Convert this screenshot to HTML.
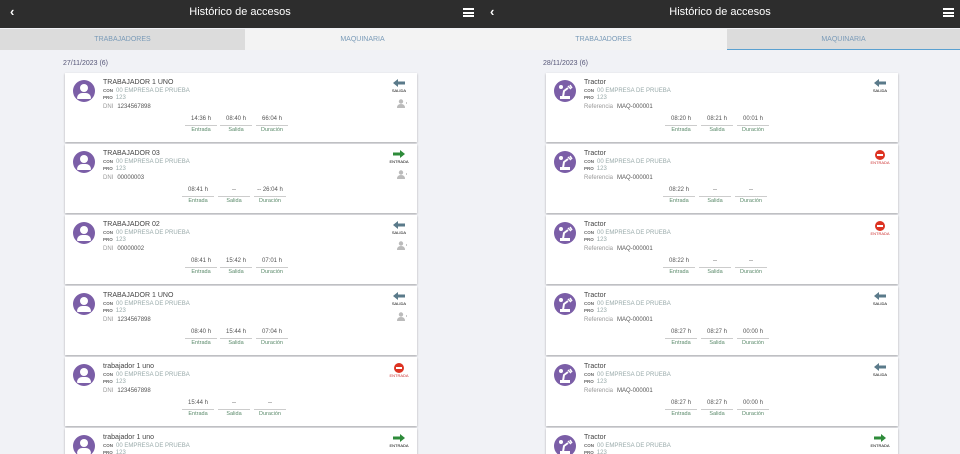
<!DOCTYPE html>
<html><head><meta charset="utf-8"><style>
*{margin:0;padding:0;box-sizing:border-box}
body{width:960px;height:454px;overflow:hidden;background:#f1f2f6;font-family:"Liberation Sans",sans-serif;position:relative}
.panel{position:absolute;top:0;width:480px;height:454px;overflow:hidden;background:#f1f2f6}
.hdr{position:absolute;top:0;left:0;width:480px;height:28px;background:#2d2d2d;color:#fff;font-size:11px;text-align:center;line-height:24px}
.hdr .b{position:absolute;left:10px;top:0;font-size:13px;font-weight:bold}
.hdr .m{position:absolute;right:6px;top:8px;width:11px;height:9px;border-top:2px solid #fff;border-bottom:2px solid #fff}
.hdr .m:after{content:"";position:absolute;left:0;right:0;top:1.5px;height:2px;background:#fff}
.tab{position:absolute;top:29px;height:21px;font-size:7px;color:#7a9bb8;text-align:center;line-height:21px}
.date{position:absolute;top:60px;font-size:7px;color:#557}
.card{position:absolute;width:352px;height:69px;background:#fff;box-shadow:0 1px 2px rgba(0,0,0,.3)}
.av{position:absolute;left:8px;top:7px;width:22px;height:22px;border-radius:50%;background:#7b5ea7;overflow:hidden}
.av .h{position:absolute;left:7px;top:4px;width:8px;height:8px;border-radius:50%;background:#fff}
.av .bd{position:absolute;left:4px;top:13px;width:14px;height:6px;border-radius:5px 5px 1px 1px;background:#fff}
.nm{position:absolute;left:38px;top:6px;font-size:7px;color:#444}
.l{position:absolute;left:38px;font-size:5.5px;color:#666}
.l b{font-weight:bold;font-size:4.5px;margin-right:3px;color:#666}
.l span{color:#9aa;font-size:6px}
.l .g{color:#999;margin-right:4px}
.l .v{color:#555}
.t{position:absolute;top:43px;width:32px;text-align:center;font-size:6px;color:#555;border-bottom:1px solid #ccc;height:10px}
.tl{position:absolute;top:54px;width:32px;text-align:center;font-size:5.5px;color:#5a8a6a}
.ic{position:absolute;right:6px;top:6px;width:24px;text-align:center;font-size:4px}
.arr{display:inline-block;width:12px;height:8px}
.stop{display:block;margin:0 auto;width:10px;height:10px;border-radius:50%;background:#d32;position:relative}
.stop:after{content:"";position:absolute;left:2px;right:2px;top:4px;height:2px;background:#fff}
.pi{position:absolute;right:10px;top:26px;width:10px;height:9px}
</style></head><body>

<div class="panel" style="left:0">
<div class="hdr"><span class="b">&lsaquo;</span>Histórico de accesos<span class="m"></span></div>
<div class="tab" style="left:0;width:245px;background:#dcdcdc">TRABAJADORES</div>
<div class="tab" style="left:245px;width:235px;background:#f3f3f3">MAQUINARIA</div>
<div class="date" style="left:63px">27/11/2023 (6)</div>

<div class="card" style="left:65px;top:73px"><div class="av"><div class="h"></div><div class="bd"></div></div>
<div class="nm">TRABAJADOR 1 UNO</div><div class="l" style="top:15px"><b>CON</b><span>00 EMPRESA DE PRUEBA</span></div><div class="l" style="top:22px"><b>PRO</b><span>123</span></div><div class="l" style="top:31px"><span class="g">DNI</span><span class="v">1234567898</span></div>
<div class="t" style="left:120px">14:36 h</div><div class="t" style="left:155px">08:40 h</div><div class="t" style="left:191px">66:04 h</div>
<div class="tl" style="left:120px">Entrada</div><div class="tl" style="left:155px">Salida</div><div class="tl" style="left:191px">Duración</div>
<div class="ic"><svg class="arr" viewBox="0 0 12 8"><path d="M0 4L5 0V2.5H12V5.5H5V8Z" fill="#5a7a8a"/></svg><div>SALIDA</div></div>
<svg class="pi" viewBox="0 0 10 9"><circle cx="4" cy="2.5" r="2.2" fill="#bbb"/><path d="M0 9Q0 5 4 5Q8 5 8 9Z" fill="#bbb"/><rect x="9" y="3" width=".8" height="2" fill="#bbb"/></svg></div>

<div class="card" style="left:65px;top:144px"><div class="av"><div class="h"></div><div class="bd"></div></div>
<div class="nm">TRABAJADOR 03</div><div class="l" style="top:15px"><b>CON</b><span>00 EMPRESA DE PRUEBA</span></div><div class="l" style="top:22px"><b>PRO</b><span>123</span></div><div class="l" style="top:31px"><span class="g">DNI</span><span class="v">00000003</span></div>
<div class="t" style="left:117px">08:41 h</div><div class="t" style="left:153px">--</div><div class="t" style="left:189px">-- 26:04 h</div>
<div class="tl" style="left:117px">Entrada</div><div class="tl" style="left:153px">Salida</div><div class="tl" style="left:189px">Duración</div>
<div class="ic"><svg class="arr" viewBox="0 0 12 8"><path d="M12 4L7 0V2.5H0V5.5H7V8Z" fill="#2e8b3a"/></svg><div>ENTRADA</div></div>
<svg class="pi" viewBox="0 0 10 9"><circle cx="4" cy="2.5" r="2.2" fill="#bbb"/><path d="M0 9Q0 5 4 5Q8 5 8 9Z" fill="#bbb"/><rect x="9" y="3" width=".8" height="2" fill="#bbb"/></svg></div>

<div class="card" style="left:65px;top:215px"><div class="av"><div class="h"></div><div class="bd"></div></div>
<div class="nm">TRABAJADOR 02</div><div class="l" style="top:15px"><b>CON</b><span>00 EMPRESA DE PRUEBA</span></div><div class="l" style="top:22px"><b>PRO</b><span>123</span></div><div class="l" style="top:31px"><span class="g">DNI</span><span class="v">00000002</span></div>
<div class="t" style="left:120px">08:41 h</div><div class="t" style="left:155px">15:42 h</div><div class="t" style="left:191px">07:01 h</div>
<div class="tl" style="left:120px">Entrada</div><div class="tl" style="left:155px">Salida</div><div class="tl" style="left:191px">Duración</div>
<div class="ic"><svg class="arr" viewBox="0 0 12 8"><path d="M0 4L5 0V2.5H12V5.5H5V8Z" fill="#5a7a8a"/></svg><div>SALIDA</div></div>
<svg class="pi" viewBox="0 0 10 9"><circle cx="4" cy="2.5" r="2.2" fill="#bbb"/><path d="M0 9Q0 5 4 5Q8 5 8 9Z" fill="#bbb"/><rect x="9" y="3" width=".8" height="2" fill="#bbb"/></svg></div>

<div class="card" style="left:65px;top:286px"><div class="av"><div class="h"></div><div class="bd"></div></div>
<div class="nm">TRABAJADOR 1 UNO</div><div class="l" style="top:15px"><b>CON</b><span>00 EMPRESA DE PRUEBA</span></div><div class="l" style="top:22px"><b>PRO</b><span>123</span></div><div class="l" style="top:31px"><span class="g">DNI</span><span class="v">1234567898</span></div>
<div class="t" style="left:120px">08:40 h</div><div class="t" style="left:155px">15:44 h</div><div class="t" style="left:191px">07:04 h</div>
<div class="tl" style="left:120px">Entrada</div><div class="tl" style="left:155px">Salida</div><div class="tl" style="left:191px">Duración</div>
<div class="ic"><svg class="arr" viewBox="0 0 12 8"><path d="M0 4L5 0V2.5H12V5.5H5V8Z" fill="#5a7a8a"/></svg><div>SALIDA</div></div>
<svg class="pi" viewBox="0 0 10 9"><circle cx="4" cy="2.5" r="2.2" fill="#bbb"/><path d="M0 9Q0 5 4 5Q8 5 8 9Z" fill="#bbb"/><rect x="9" y="3" width=".8" height="2" fill="#bbb"/></svg></div>

<div class="card" style="left:65px;top:357px"><div class="av"><div class="h"></div><div class="bd"></div></div>
<div class="nm">trabajador 1 uno</div><div class="l" style="top:15px"><b>CON</b><span>00 EMPRESA DE PRUEBA</span></div><div class="l" style="top:22px"><b>PRO</b><span>123</span></div><div class="l" style="top:31px"><span class="g">DNI</span><span class="v">1234567898</span></div>
<div class="t" style="left:117px">15:44 h</div><div class="t" style="left:153px">--</div><div class="t" style="left:189px">--</div>
<div class="tl" style="left:117px">Entrada</div><div class="tl" style="left:153px">Salida</div><div class="tl" style="left:189px">Duración</div>
<div class="ic"><span class="stop"></span><div style="color:#c33">ENTRADA</div></div></div>

<div class="card" style="left:65px;top:428px"><div class="av"><div class="h"></div><div class="bd"></div></div>
<div class="nm">trabajador 1 uno</div><div class="l" style="top:15px"><b>CON</b><span>00 EMPRESA DE PRUEBA</span></div><div class="l" style="top:22px"><b>PRO</b><span>123</span></div>
<div class="ic"><svg class="arr" viewBox="0 0 12 8"><path d="M12 4L7 0V2.5H0V5.5H7V8Z" fill="#2e8b3a"/></svg><div>ENTRADA</div></div></div>
</div>

<div class="panel" style="left:480px">
<div class="hdr"><span class="b">&lsaquo;</span>Histórico de accesos<span class="m"></span></div>
<div class="tab" style="left:0;width:247px;background:#f3f3f3">TRABAJADORES</div>
<div class="tab" style="left:247px;width:233px;background:#dcdcdc;border-bottom:1px solid #5aa0d0">MAQUINARIA</div>
<div class="date" style="left:63px">28/11/2023 (6)</div>

<div class="card" style="left:66px;top:73px"><div class="av"><svg width="22" height="22" viewBox="0 0 22 22"><path d="M7 17H15V18H7ZM9 17L10 11L14 8" stroke="#fff" stroke-width="2" fill="none"/><circle cx="7" cy="7" r="2" fill="#fff"/><path d="M14 6L17 9M16 5L18 8" stroke="#fff" stroke-width="1.5"/></svg></div>
<div class="nm">Tractor</div><div class="l" style="top:15px"><b>CON</b><span>00 EMPRESA DE PRUEBA</span></div><div class="l" style="top:22px"><b>PRO</b><span>123</span></div><div class="l" style="top:31px"><span class="g">Referencia</span><span class="v">MAQ-000001</span></div>
<div class="t" style="left:119px">08:20 h</div><div class="t" style="left:155px">08:21 h</div><div class="t" style="left:191px">00:01 h</div>
<div class="tl" style="left:119px">Entrada</div><div class="tl" style="left:155px">Salida</div><div class="tl" style="left:191px">Duración</div>
<div class="ic"><svg class="arr" viewBox="0 0 12 8"><path d="M0 4L5 0V2.5H12V5.5H5V8Z" fill="#5a7a8a"/></svg><div>SALIDA</div></div></div>

<div class="card" style="left:66px;top:144px"><div class="av"><svg width="22" height="22" viewBox="0 0 22 22"><path d="M7 17H15V18H7ZM9 17L10 11L14 8" stroke="#fff" stroke-width="2" fill="none"/><circle cx="7" cy="7" r="2" fill="#fff"/><path d="M14 6L17 9M16 5L18 8" stroke="#fff" stroke-width="1.5"/></svg></div>
<div class="nm">Tractor</div><div class="l" style="top:15px"><b>CON</b><span>00 EMPRESA DE PRUEBA</span></div><div class="l" style="top:22px"><b>PRO</b><span>123</span></div><div class="l" style="top:31px"><span class="g">Referencia</span><span class="v">MAQ-000001</span></div>
<div class="t" style="left:117px">08:22 h</div><div class="t" style="left:153px">--</div><div class="t" style="left:189px">--</div>
<div class="tl" style="left:117px">Entrada</div><div class="tl" style="left:153px">Salida</div><div class="tl" style="left:189px">Duración</div>
<div class="ic"><span class="stop"></span><div style="color:#c33">ENTRADA</div></div></div>

<div class="card" style="left:66px;top:215px"><div class="av"><svg width="22" height="22" viewBox="0 0 22 22"><path d="M7 17H15V18H7ZM9 17L10 11L14 8" stroke="#fff" stroke-width="2" fill="none"/><circle cx="7" cy="7" r="2" fill="#fff"/><path d="M14 6L17 9M16 5L18 8" stroke="#fff" stroke-width="1.5"/></svg></div>
<div class="nm">Tractor</div><div class="l" style="top:15px"><b>CON</b><span>00 EMPRESA DE PRUEBA</span></div><div class="l" style="top:22px"><b>PRO</b><span>123</span></div><div class="l" style="top:31px"><span class="g">Referencia</span><span class="v">MAQ-000001</span></div>
<div class="t" style="left:117px">08:22 h</div><div class="t" style="left:153px">--</div><div class="t" style="left:189px">--</div>
<div class="tl" style="left:117px">Entrada</div><div class="tl" style="left:153px">Salida</div><div class="tl" style="left:189px">Duración</div>
<div class="ic"><span class="stop"></span><div style="color:#c33">ENTRADA</div></div></div>

<div class="card" style="left:66px;top:286px"><div class="av"><svg width="22" height="22" viewBox="0 0 22 22"><path d="M7 17H15V18H7ZM9 17L10 11L14 8" stroke="#fff" stroke-width="2" fill="none"/><circle cx="7" cy="7" r="2" fill="#fff"/><path d="M14 6L17 9M16 5L18 8" stroke="#fff" stroke-width="1.5"/></svg></div>
<div class="nm">Tractor</div><div class="l" style="top:15px"><b>CON</b><span>00 EMPRESA DE PRUEBA</span></div><div class="l" style="top:22px"><b>PRO</b><span>123</span></div><div class="l" style="top:31px"><span class="g">Referencia</span><span class="v">MAQ-000001</span></div>
<div class="t" style="left:119px">08:27 h</div><div class="t" style="left:155px">08:27 h</div><div class="t" style="left:191px">00:00 h</div>
<div class="tl" style="left:119px">Entrada</div><div class="tl" style="left:155px">Salida</div><div class="tl" style="left:191px">Duración</div>
<div class="ic"><svg class="arr" viewBox="0 0 12 8"><path d="M0 4L5 0V2.5H12V5.5H5V8Z" fill="#5a7a8a"/></svg><div>SALIDA</div></div></div>

<div class="card" style="left:66px;top:357px"><div class="av"><svg width="22" height="22" viewBox="0 0 22 22"><path d="M7 17H15V18H7ZM9 17L10 11L14 8" stroke="#fff" stroke-width="2" fill="none"/><circle cx="7" cy="7" r="2" fill="#fff"/><path d="M14 6L17 9M16 5L18 8" stroke="#fff" stroke-width="1.5"/></svg></div>
<div class="nm">Tractor</div><div class="l" style="top:15px"><b>CON</b><span>00 EMPRESA DE PRUEBA</span></div><div class="l" style="top:22px"><b>PRO</b><span>123</span></div><div class="l" style="top:31px"><span class="g">Referencia</span><span class="v">MAQ-000001</span></div>
<div class="t" style="left:119px">08:27 h</div><div class="t" style="left:155px">08:27 h</div><div class="t" style="left:191px">00:00 h</div>
<div class="tl" style="left:119px">Entrada</div><div class="tl" style="left:155px">Salida</div><div class="tl" style="left:191px">Duración</div>
<div class="ic"><svg class="arr" viewBox="0 0 12 8"><path d="M0 4L5 0V2.5H12V5.5H5V8Z" fill="#5a7a8a"/></svg><div>SALIDA</div></div></div>

<div class="card" style="left:66px;top:428px"><div class="av"><svg width="22" height="22" viewBox="0 0 22 22"><path d="M7 17H15V18H7ZM9 17L10 11L14 8" stroke="#fff" stroke-width="2" fill="none"/><circle cx="7" cy="7" r="2" fill="#fff"/><path d="M14 6L17 9M16 5L18 8" stroke="#fff" stroke-width="1.5"/></svg></div>
<div class="nm">Tractor</div><div class="l" style="top:15px"><b>CON</b><span>00 EMPRESA DE PRUEBA</span></div><div class="l" style="top:22px"><b>PRO</b><span>123</span></div>
<div class="ic"><svg class="arr" viewBox="0 0 12 8"><path d="M12 4L7 0V2.5H0V5.5H7V8Z" fill="#2e8b3a"/></svg><div>ENTRADA</div></div></div>
</div>
</body></html>
